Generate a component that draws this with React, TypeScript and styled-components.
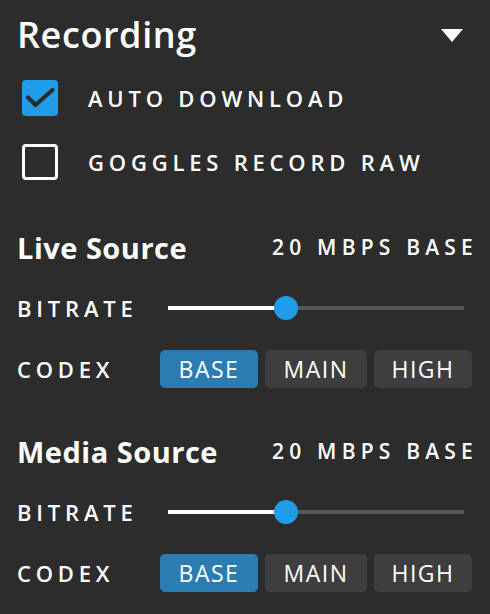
import { useState } from "react";
import styled, { createGlobalStyle } from "styled-components";

const GlobalStyle = createGlobalStyle`
  html, body {
    margin: 0;
    background: #2c2c2c;
  }
  body {
    font-family: "Open Sans", "Noto Sans", sans-serif;
    color: #ffffff;
  }
`;

const Panel = styled.div`
  display: flex;
  flex-direction: column;
  padding: 0 18px 0 17px;
  width: 490px;
  box-sizing: border-box;
`;

const Header = styled.div`
  display: flex;
  align-items: center;
  justify-content: space-between;
  height: 70px;
`;

const Title = styled.h1`
  margin: 0;
  font-size: 36px;
  font-weight: 600;
  letter-spacing: 0.6px;
  line-height: 1;
`;

const Caret = styled.button`
  width: 0;
  height: 0;
  padding: 0;
  margin-right: 9px;
  background: none;
  border: none;
  border-left: 11px solid transparent;
  border-right: 11px solid transparent;
  border-top: 13px solid #ffffff;
  cursor: pointer;
`;

const CheckList = styled.div`
  display: flex;
  flex-direction: column;
  gap: 28px;
  margin-top: 10px;
  padding-left: 5px;
`;

const CheckRow = styled.label`
  display: flex;
  align-items: center;
  gap: 30px;
  height: 36px;
  cursor: pointer;
`;

const Box = styled.span<{ $checked: boolean }>`
  display: flex;
  align-items: center;
  justify-content: center;
  width: 36px;
  height: 36px;
  box-sizing: border-box;
  border-radius: 4px;
  background: ${(p) => (p.$checked ? "#1f9de9" : "transparent")};
  border: ${(p) => (p.$checked ? "none" : "3.5px solid #ffffff")};
`;

const Caps = styled.span`
  font-size: 22px;
  font-weight: 600;
  letter-spacing: 4.8px;
  line-height: 1;
  text-transform: uppercase;
`;

const Sections = styled.div`
  display: flex;
  flex-direction: column;
  gap: 42px;
  margin-top: 47px;
`;

const Section = styled.section`
  display: flex;
  flex-direction: column;
  gap: 21px;
`;

const SectionHead = styled.div`
  display: flex;
  align-items: center;
  justify-content: space-between;
  height: 40px;
`;

const SectionTitle = styled.h2`
  margin: 0;
  font-size: 29px;
  font-weight: 700;
  letter-spacing: 0.5px;
  line-height: 1;
`;

const Summary = styled(Caps)`
  font-size: 21px;
  letter-spacing: 5.2px;
  margin-right: -6px;
`;

const FieldRow = styled.div`
  display: grid;
  grid-template-columns: 143px 1fr;
  align-items: center;
  height: 40px;
`;

const SliderWrap = styled.div`
  position: relative;
  margin: 0 8px;
  height: 24px;
  display: flex;
  align-items: center;
`;

const Track = styled.div`
  position: relative;
  width: 100%;
  height: 4px;
  background: #575757;
`;

const Fill = styled.div`
  height: 100%;
  background: #ffffff;
`;

const Thumb = styled.div`
  position: absolute;
  top: 50%;
  width: 24px;
  height: 24px;
  border-radius: 50%;
  background: #1f9de9;
  transform: translate(-50%, -50%);
`;

const Segments = styled.div`
  display: grid;
  grid-template-columns: 98px 102px 98px;
  gap: 7px;
  height: 38px;
`;

const Segment = styled.button<{ $active: boolean }>`
  border: none;
  border-radius: 5px;
  background: ${(p) => (p.$active ? "#2a7cb3" : "#3e3e3e")};
  color: #ffffff;
  font-family: inherit;
  font-size: 23px;
  font-weight: 400;
  letter-spacing: 1.5px;
  line-height: 1;
  padding: 0;
  cursor: pointer;
`;

const CheckMark = () => (
  <svg width="36" height="36" viewBox="0 0 36 36">
    <polyline
      points="6,17.5 13.5,25 30.5,10"
      fill="none"
      stroke="#2c2c2c"
      strokeWidth="4.2"
      strokeLinecap="round"
      strokeLinejoin="round"
    />
  </svg>
);

const CODECS = ["BASE", "MAIN", "HIGH"];

const Source = ({ name }: { name: string }) => {
  const [bitrate] = useState(40);
  const [codec, setCodec] = useState("BASE");

  return (
    <Section>
      <SectionHead>
        <SectionTitle>{name}</SectionTitle>
        <Summary>20 Mbps {codec}</Summary>
      </SectionHead>
      <FieldRow>
        <Caps>Bitrate</Caps>
        <SliderWrap>
          <Track>
            <Fill style={{ width: `${bitrate}%` }} />
            <Thumb style={{ left: `${bitrate}%` }} />
          </Track>
        </SliderWrap>
      </FieldRow>
      <FieldRow>
        <Caps>Codex</Caps>
        <Segments>
          {CODECS.map((c) => (
            <Segment key={c} $active={c === codec} onClick={() => setCodec(c)}>
              {c}
            </Segment>
          ))}
        </Segments>
      </FieldRow>
    </Section>
  );
};

export default function App() {
  const [autoDownload, setAutoDownload] = useState(true);
  const [recordRaw, setRecordRaw] = useState(false);

  return (
    <>
      <GlobalStyle />
      <Panel>
        <Header>
          <Title>Recording</Title>
          <Caret aria-label="Collapse" />
        </Header>
        <CheckList>
          <CheckRow onClick={() => setAutoDownload(!autoDownload)}>
            <Box $checked={autoDownload}>{autoDownload && <CheckMark />}</Box>
            <Caps>Auto Download</Caps>
          </CheckRow>
          <CheckRow onClick={() => setRecordRaw(!recordRaw)}>
            <Box $checked={recordRaw}>{recordRaw && <CheckMark />}</Box>
            <Caps>Goggles Record Raw</Caps>
          </CheckRow>
        </CheckList>
        <Sections>
          <Source name="Live Source" />
          <Source name="Media Source" />
        </Sections>
      </Panel>
    </>
  );
}
